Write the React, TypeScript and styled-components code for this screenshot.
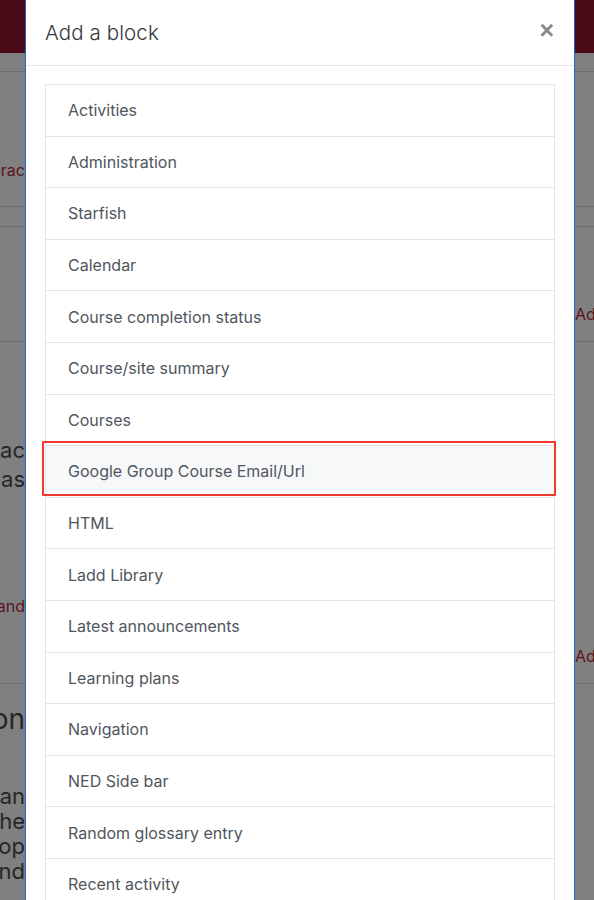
import styled, { createGlobalStyle } from "styled-components";

const GlobalStyle = createGlobalStyle`
  html, body {
    margin: 0;
    padding: 0;
    background: #808080;
    overflow: hidden;
  }
  body {
    font-family: Inter, "Liberation Sans", sans-serif;
  }
`;

const blocks = [
  "Activities",
  "Administration",
  "Starfish",
  "Calendar",
  "Course completion status",
  "Course/site summary",
  "Courses",
  "Google Group Course Email/Url",
  "HTML",
  "Ladd Library",
  "Latest announcements",
  "Learning plans",
  "Navigation",
  "NED Side bar",
  "Random glossary entry",
  "Recent activity",
  "Recently accessed courses",
];

// background page, dimmed by the backdrop
const SPage = styled.div`
  width: 594px;
  height: 900px;
  overflow: hidden;
  background: #808080;
`;

const STopBar = styled.div`
  height: 53px;
  background: #4b0a17;
`;

const SSection = styled.div<{ $h: number }>`
  height: ${(p) => p.$h}px;
  box-sizing: border-box;
  border-bottom: 1px solid #6e6e6e;
  display: grid;
  grid-template-columns: 25px 550px 1fr;
`;

const SLeftCol = styled.div<{ $pt: number }>`
  display: flex;
  flex-direction: column;
  align-items: flex-end;
  padding-top: ${(p) => p.$pt}px;
  white-space: nowrap;
`;

const SRightCol = styled.div<{ $pt: number }>`
  grid-column: 3;
  padding-top: ${(p) => p.$pt}px;
  white-space: nowrap;
  overflow: hidden;
`;

const SLink = styled.span`
  font-size: 16px;
  line-height: 20px;
  color: #5a1422;
`;

const SBgText = styled.span<{ $size: number; $lh: number }>`
  font-size: ${(p) => p.$size}px;
  line-height: ${(p) => p.$lh}px;
  color: #262626;
`;

const SSpacer = styled.div<{ $h: number }>`
  height: ${(p) => p.$h}px;
`;

// modal
const SModal = styled.div`
  position: fixed;
  top: -10px;
  bottom: -10px;
  left: 25px;
  width: 550px;
  box-sizing: border-box;
  background: #fff;
  border-left: 1.5px solid #1d68cf;
  border-right: 1.5px solid #1d68cf;
  display: flex;
  flex-direction: column;
  overflow: hidden;
`;

const SModalHeader = styled.div`
  flex-shrink: 0;
  height: 76px;
  box-sizing: border-box;
  padding: 30px 20px 0 19px;
  border-bottom: 1px solid #e3e6ea;
  display: flex;
  justify-content: space-between;
  align-items: flex-start;
`;

const STitle = styled.h5`
  margin: 0;
  font-size: 20.5px;
  line-height: 25px;
  font-weight: 300;
  color: #333a40;
  letter-spacing: 0.1px;
`;

const SClose = styled.button`
  border: 0;
  background: none;
  padding: 0;
  margin-top: -2px;
  font-family: "Liberation Sans", sans-serif;
  font-size: 25px;
  font-weight: 700;
  line-height: 25px;
  color: #8a8a8a;
  cursor: pointer;
`;

const SBody = styled.div`
  flex-shrink: 0;
  padding: 18px 19px 0 19px;
`;

const SList = styled.ul`
  list-style: none;
  margin: 0;
  padding: 0;
  border: 1px solid #e2e4e7;
  border-bottom: 0;
`;

const SItem = styled.li<{ $active?: boolean }>`
  position: relative;
  height: 51.6px;
  box-sizing: border-box;
  padding: 0 22px;
  display: flex;
  align-items: center;
  border-bottom: 1px solid #e2e4e7;
  background: ${(p) => (p.$active ? "#f7f8fa" : "#fff")};
  font-size: 16px;
  color: #50565d;
  ${(p) =>
    p.$active &&
    `
    &::after {
      content: "";
      position: absolute;
      top: -5px;
      left: -4px;
      right: -2px;
      bottom: 1px;
      border: 2.5px solid #f0392f;
      border-radius: 1px;
    }
  `}
`;

const App = () => {
  return (
    <>
      <GlobalStyle />
      <SPage>
        <STopBar />
        <SSection $h={19} />
        <SSection $h={135}>
          <SLeftCol $pt={88}>
            <SLink>Interac</SLink>
          </SLeftCol>
        </SSection>
        <SSection $h={20} />
        <SSection $h={115}>
          <SRightCol $pt={77}>
            <SLink>Add</SLink>
          </SRightCol>
        </SSection>
        <SSection $h={342}>
          <SLeftCol $pt={94}>
            <SBgText $size={22} $lh={29}>Interac</SBgText>
            <SBgText $size={22} $lh={29}>has</SBgText>
            <SSpacer $h={102} />
            <SLink>and</SLink>
          </SLeftCol>
          <SRightCol $pt={304}>
            <SLink>Add</SLink>
          </SRightCol>
        </SSection>
        <SSection $h={240}>
          <SLeftCol $pt={18}>
            <SBgText $size={28} $lh={34}>Section</SBgText>
            <SSpacer $h={48} />
            <SBgText $size={22} $lh={25}>can</SBgText>
            <SBgText $size={22} $lh={25}>the</SBgText>
            <SBgText $size={22} $lh={25}>top</SBgText>
            <SBgText $size={22} $lh={25}>and</SBgText>
          </SLeftCol>
        </SSection>
      </SPage>

      <SModal>
        <SModalHeader>
          <STitle>Add a block</STitle>
          <SClose aria-label="Close">×</SClose>
        </SModalHeader>
        <SBody>
          <SList>
            {blocks.map((name) => (
              <SItem key={name} $active={name.startsWith("Google")}>
                {name}
              </SItem>
            ))}
          </SList>
        </SBody>
      </SModal>
    </>
  );
};

export default App;
